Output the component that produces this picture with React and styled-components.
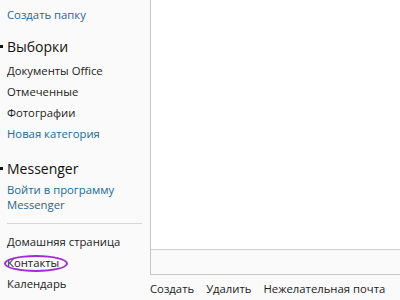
import styled, { createGlobalStyle } from 'styled-components';

const GlobalStyle = createGlobalStyle`
  html, body {
    margin: 0;
    padding: 0;
    background: #fafafa;
  }
  #root {
    height: 300px;
    overflow: hidden;
  }
`;

const Shell = styled.div`
  display: flex;
  height: 300px;
  font-family: "Open Sans", "Liberation Sans", sans-serif;
  font-size: 11.3px;
  color: #222;
`;

const Sidebar = styled.nav`
  width: 150px;
  flex-shrink: 0;
  box-sizing: border-box;
  padding: 4px 5px 0 7px;
  background: #fafafa;
`;

const Section = styled.div`
  margin-top: ${({ $gap }) => $gap || 0}px;
`;

const Heading = styled.div`
  position: relative;
  font-size: 14px;
  line-height: 27px;
  color: #111;

  &::before {
    content: '';
    position: absolute;
    left: -7px;
    top: 12px;
    width: 3px;
    height: 3px;
    background: #111;
  }
`;

const Item = styled.div`
  position: relative;
  white-space: nowrap;
  line-height: 21px;
  color: ${({ $link }) => ($link ? '#1d6898' : '#222')};

  ${({ $circled }) =>
    $circled &&
    `
    &::after {
      content: '';
      position: absolute;
      left: -3px;
      top: 3px;
      width: 60px;
      height: 13px;
      border: 2px solid #a02cd8;
      border-radius: 50%;
    }
  `}
`;

const WrapItem = styled.div`
  width: 120px;
  line-height: 15px;
  color: #1d6898;
`;

const Divider = styled.hr`
  border: none;
  border-top: 1px solid #d6d6d6;
  margin: 11px 3px 7px 0;
`;

const Main = styled.div`
  flex: 1;
  min-width: 0;
  display: flex;
  flex-direction: column;
`;

const Panel = styled.section`
  height: 275px;
  flex-shrink: 0;
  box-sizing: border-box;
  display: flex;
  flex-direction: column;
  background: #fff;
  border-left: 1px solid #c6c6c6;
  border-bottom: 1px solid #c6c6c6;
`;

const PanelBody = styled.div`
  flex: 1;
`;

const PanelFooter = styled.div`
  height: 24px;
  background: #fafafa;
  border-top: 1px solid #cfcfcf;
`;

const Toolbar = styled.div`
  display: flex;
  gap: 12px;
  padding-top: 3px;
  line-height: 21px;
  white-space: nowrap;
  color: #222;
`;

const ToolButton = styled.span`
  flex-shrink: 0;
  cursor: pointer;
`;

export default function App() {
  return (
    <>
      <GlobalStyle />
      <Shell>
        <Sidebar>
          <Item $link>Создать папку</Item>

          <Section $gap={8}>
            <Heading>Выборки</Heading>
            <Item>Документы Office</Item>
            <Item>Отмеченные</Item>
            <Item>Фотографии</Item>
            <Item $link>Новая категория</Item>
          </Section>

          <Section $gap={11}>
            <Heading>Messenger</Heading>
            <WrapItem>Войти в программу Messenger</WrapItem>
          </Section>

          <Divider />

          <Item>Домашняя страница</Item>
          <Item $circled>Контакты</Item>
          <Item>Календарь</Item>
        </Sidebar>

        <Main>
          <Panel>
            <PanelBody />
            <PanelFooter />
          </Panel>
          <Toolbar>
            <ToolButton>Создать</ToolButton>
            <ToolButton>Удалить</ToolButton>
            <ToolButton>Нежелательная почта</ToolButton>
          </Toolbar>
        </Main>
      </Shell>
    </>
  );
}
